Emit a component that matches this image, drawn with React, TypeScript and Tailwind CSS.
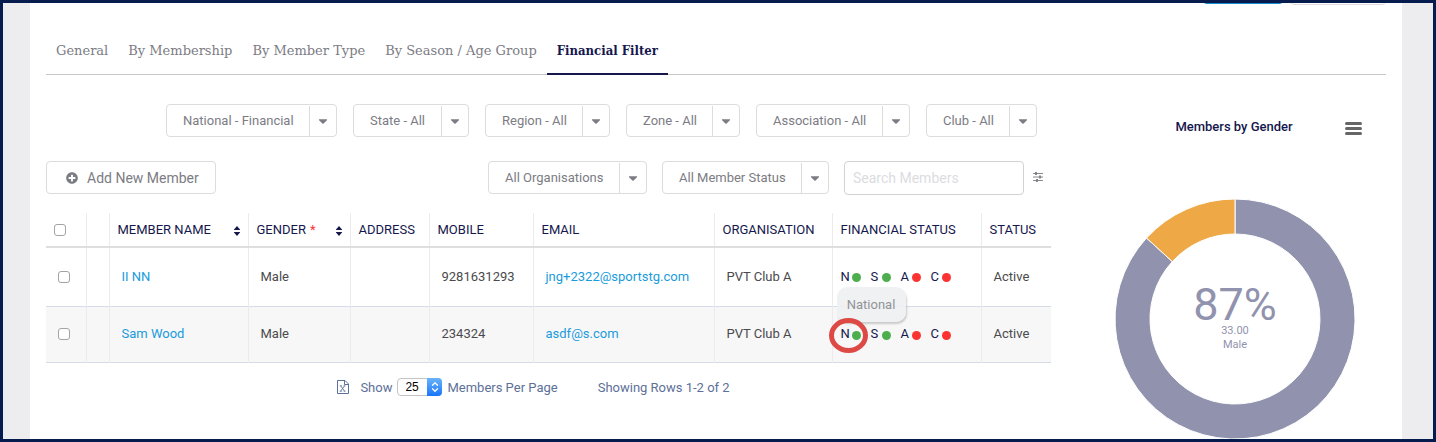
import { FaCaretDown, FaPlusCircle } from "react-icons/fa";

const tabs = ["General", "By Membership", "By Member Type", "By Season / Age Group", "Financial Filter"];

const levelFilters = [
  { label: "National", value: "National - Financial" },
  { label: "State", value: "State - All" },
  { label: "Region", value: "Region - All" },
  { label: "Zone", value: "Zone - All" },
  { label: "Association", value: "Association - All" },
  { label: "Club", value: "Club - All" },
];

interface Member {
  name: string;
  gender: string;
  mobile: string;
  email: string;
  organisation: string;
  status: string;
  highlighted?: boolean;
}

const members: Member[] = [
  {
    name: "II NN",
    gender: "Male",
    mobile: "9281631293",
    email: "jng+2322@sportstg.com",
    organisation: "PVT Club A",
    status: "Active",
  },
  {
    name: "Sam Wood",
    gender: "Male",
    mobile: "234324",
    email: "asdf@s.com",
    organisation: "PVT Club A",
    status: "Active",
    highlighted: true,
  },
];

const levels = [
  { code: "N", paid: true },
  { code: "S", paid: true },
  { code: "A", paid: false },
  { code: "C", paid: false },
];

function FilterSelect({ label, value }: { label: string; value: string }) {
  return (
    <div className="relative">
      <select
        aria-label={label}
        className="block h-[33px] appearance-none rounded border border-[#dcdcdc] bg-white pl-4 pr-[42px] text-[13px] text-[#7c7c84]"
      >
        <option>{value}</option>
      </select>
      <span className="pointer-events-none absolute top-0.5 right-px bottom-px flex w-[27px] items-center justify-center border-l border-[#dcdcdc] text-[#7c7c84]">
        <FaCaretDown className="size-3.5" />
      </span>
    </div>
  );
}

function SortIcon() {
  return (
    <svg viewBox="0 0 6 10" className="mt-0.5 h-2.5 w-1.5 shrink-0" fill="#15174d">
      <path d="M3 0 6 3.6V4H0V3.6ZM0 6H6V6.4L3 10 0 6.4Z" />
    </svg>
  );
}

function SlidersIcon() {
  return (
    <svg viewBox="0 0 10 10" className="size-2.5" stroke="#7c7c84" fill="#7c7c84">
      <path d="M0 1.5H10M0 5H10M0 8.5H10" strokeWidth="0.9" />
      <path d="M3 0V3M7 3.5V6.5M4 7V10" strokeWidth="1.8" />
    </svg>
  );
}

function ExcelIcon() {
  return (
    <svg viewBox="0 0 12 14" className="h-3.5 w-3" fill="none" stroke="#5d7099">
      <path d="M0.5 0.5H8L11.5 4V13.5H0.5ZM7.5 0.5V4.5H11.5" />
      <path d="M3.6 5.8 7.6 11.2M7.6 5.8 3.6 11.2M2.8 5.8H4.8M6.6 5.8H8.4M2.8 11.2H4.8M6.6 11.2H8.4" strokeWidth="0.9" />
    </svg>
  );
}

function Checkbox({ label }: { label: string }) {
  return (
    <input
      type="checkbox"
      aria-label={label}
      className="block size-3 appearance-none rounded-[3px] border border-[#a3a3a3] bg-white checked:bg-[#1a9bdc]"
    />
  );
}

function FinancialStatus({ highlighted }: { highlighted?: boolean }) {
  return (
    <div className="relative flex text-[13px] leading-4 text-[#15174d]">
      {levels.map((level) => (
        <span key={level.code} className="flex w-[30px] items-center">
          <span className="w-[11px]">{level.code}</span>
          <span className={level.paid ? "mt-0.5 size-[9px] rounded-full bg-[#4cae4c]" : "mt-0.5 size-[9px] rounded-full bg-[#fb3333]"} />
        </span>
      ))}
      {highlighted && (
        <>
          <span
            role="tooltip"
            className="absolute bottom-5 -left-1 flex h-[35px] w-[69px] items-center justify-center rounded-[10px] bg-[#eef0f2]/90 text-[13px] text-[#929498] shadow-[1px_2px_2px_rgba(0,0,0,0.18)]"
          >
            National
          </span>
          {/* ring round the national level */}
          <span className="absolute -top-2 -left-3 h-[35px] w-[39px] rounded-[50%] border-5 border-[#dd4a45]" />
        </>
      )}
    </div>
  );
}

function MemberTable() {
  const th = "border-r border-[#ebebed] px-2 font-normal last:border-r-0";
  const td = "border-r border-[#ebebed] px-3 last:border-r-0";

  return (
    <table className="w-full table-fixed text-left text-[13px] whitespace-nowrap text-[#4a4a4c]">
      <colgroup>
        <col className="w-10" />
        <col className="w-[23px]" />
        <col className="w-[139px]" />
        <col className="w-[102px]" />
        <col className="w-[79px]" />
        <col className="w-[104px]" />
        <col className="w-[181px]" />
        <col className="w-[118px]" />
        <col className="w-[149px]" />
        <col className="w-[70px]" />
      </colgroup>
      <thead className="text-[#15174d]">
        <tr className="h-[34px] border-b-2 border-[#dfdfe0]">
          <th className={th}>
            <Checkbox label="Select all members" />
          </th>
          <th className={th} />
          <th className={th}>
            <span className="flex items-center justify-between">
              MEMBER NAME <SortIcon />
            </span>
          </th>
          <th className={th}>
            <span className="flex items-center">
              GENDER <span className="ml-1 flex-1 text-[#f33]">*</span> <SortIcon />
            </span>
          </th>
          <th className={th}>ADDRESS</th>
          <th className={th}>MOBILE</th>
          <th className={th}>EMAIL</th>
          <th className={th}>ORGANISATION</th>
          <th className={th}>FINANCIAL STATUS</th>
          <th className={th}>STATUS</th>
        </tr>
      </thead>
      <tbody>
        {members.map((member) => (
          <tr key={member.name} className="h-14 border-b border-[#d5dce8] first:h-[59px] even:bg-[#f7f7f7]">
            <td className={td}>
              <Checkbox label={`Select ${member.name}`} />
            </td>
            <td className={td} />
            <td className={td}>
              <a href="#" className="text-[#1a9bdc]">{member.name}</a>
            </td>
            <td className={td}>{member.gender}</td>
            <td className={td} />
            <td className={td}>{member.mobile}</td>
            <td className={td}>
              <a href="#" className="text-[#1a9bdc]">{member.email}</a>
            </td>
            <td className={td}>{member.organisation}</td>
            <td className="border-r border-[#ebebed] px-2">
              <FinancialStatus highlighted={member.highlighted} />
            </td>
            <td className={td}>{member.status}</td>
          </tr>
        ))}
      </tbody>
    </table>
  );
}

function Pager() {
  return (
    <div className="mt-[15px] flex items-center justify-center gap-10 pr-[30px] text-[13px] text-[#5d7099]">
      <div className="flex items-center">
        <button type="button" aria-label="Export to Excel" className="mr-[11px]">
          <ExcelIcon />
        </button>
        <label htmlFor="page-size">Show</label>
        <span className="relative mx-[5px]">
          <select
            id="page-size"
            className="block h-[18px] w-[45px] appearance-none rounded border border-[#c4c4c4] bg-white pl-[7px] font-['Liberation_Sans',sans-serif] text-xs leading-4 text-black"
          >
            <option>25</option>
          </select>
          <span className="pointer-events-none absolute inset-y-0 right-0 flex w-[15px] items-center justify-center rounded-r bg-gradient-to-b from-[#68b3fa] to-[#1874f8]">
            <svg viewBox="0 0 8 12" className="h-3 w-2" fill="none" stroke="white" strokeWidth="1.3" strokeLinecap="round" strokeLinejoin="round">
              <path d="M1.5 4.2 4 1.8 6.5 4.2M1.5 7.8 4 10.2 6.5 7.8" />
            </svg>
          </span>
        </span>
        <span>Members Per Page</span>
      </div>
      <span>Showing Rows 1-2 of 2</span>
    </div>
  );
}

function GenderChart() {
  return (
    <section className="pt-3 pl-8">
      <div className="flex h-6 items-center">
        <h2 className="flex-1 pb-0.5 pl-10 text-center text-[13px] font-medium text-[#15174d]">Members by Gender</h2>
        <button type="button" aria-label="Chart menu" className="mr-6 flex w-[17px] flex-col gap-0.5">
          <span className="h-[3px] rounded-full bg-[#666]" />
          <span className="h-[3px] rounded-full bg-[#666]" />
          <span className="h-[3px] rounded-full bg-[#666]" />
        </button>
      </div>
      {/* 87% male, the rest female */}
      <svg viewBox="0 0 240 240" className="mx-auto mt-[59px] block size-60 font-[Roboto,sans-serif]">
        <g stroke="white" strokeWidth="1">
          <path d="M120 0A120 120 0 1 1 31.5 39L57.3 62.6A85 85 0 1 0 120 35Z" fill="#9193ae" />
          <path d="M31.5 39A120 120 0 0 1 120 0V35A85 85 0 0 0 57.3 62.6Z" fill="#eea846" />
        </g>
        <g fill="#9193ae" textAnchor="middle">
          <text x="120" y="121" fontSize="45">87%</text>
          <text x="120" y="135" fontSize="11">33.00</text>
          <text x="120" y="149" fontSize="11">Male</text>
        </g>
      </svg>
    </section>
  );
}

export default function App() {
  return (
    <div className="min-h-screen border-3 border-[#061b4e] bg-[#ededef] pr-[31px] pl-[27px] font-[Roboto,sans-serif]">
      <main className="min-h-[calc(100vh-6px)] bg-white px-4">
        {/* bottom edge of the page action buttons */}
        <div className="flex h-0.5 items-end justify-end gap-[7px] overflow-hidden">
          <button type="button" aria-label="Save" className="mb-px h-8 w-20 rounded-sm bg-[#1a8bcb]" />
          <button type="button" aria-label="Cancel" className="h-8 w-24 rounded-sm border border-[#dcdcdc] bg-white" />
        </div>

        <nav className="flex h-[70px] border-b border-[#c8c8c8] text-[13px]">
          {tabs.map((tab) => (
            <a
              key={tab}
              href="#"
              className={
                tab === "Financial Filter"
                  ? "-mb-px border-b-2 border-[#15174d] px-2.5 pt-9 font-['Roboto_Slab','DejaVu_Serif_Condensed','DejaVu_Serif',serif] font-bold text-[#15174d]"
                  : "px-2.5 pt-9 font-['Roboto_Slab','DejaVu_Serif',serif] text-[#7c7c84]"
              }
            >
              {tab}
            </a>
          ))}
        </nav>

        <div className="grid grid-cols-4 pt-[29px]">
          <div className="col-span-3">
            <div className="flex justify-end gap-4 pr-3.5">
              {levelFilters.map((filter) => (
                <FilterSelect key={filter.label} label={filter.label} value={filter.value} />
              ))}
            </div>

            <div className="mt-6 flex items-start gap-[15px] pr-2">
              <button
                type="button"
                className="mr-auto flex h-[33px] items-center gap-[9px] rounded border border-[#dcdcdc] px-4 pl-[19px] text-sm text-[#7c7c84]"
              >
                <FaPlusCircle className="size-3" />
                Add New Member
              </button>
              <FilterSelect label="Organisation" value="All Organisations" />
              <FilterSelect label="Member status" value="All Member Status" />
              <div className="flex items-center gap-[9px]">
                <input
                  type="search"
                  aria-label="Search members"
                  placeholder="Search Members"
                  className="h-[34px] w-[180px] rounded border border-[#d2d2d4] px-2 text-sm placeholder:text-[#dcdcdf]"
                />
                <button type="button" aria-label="Advanced search" className="pb-0.5">
                  <SlidersIcon />
                </button>
              </div>
            </div>

            <div className="mt-[18px]">
              <MemberTable />
            </div>
            <Pager />
          </div>
          <GenderChart />
        </div>
      </main>
    </div>
  );
}
